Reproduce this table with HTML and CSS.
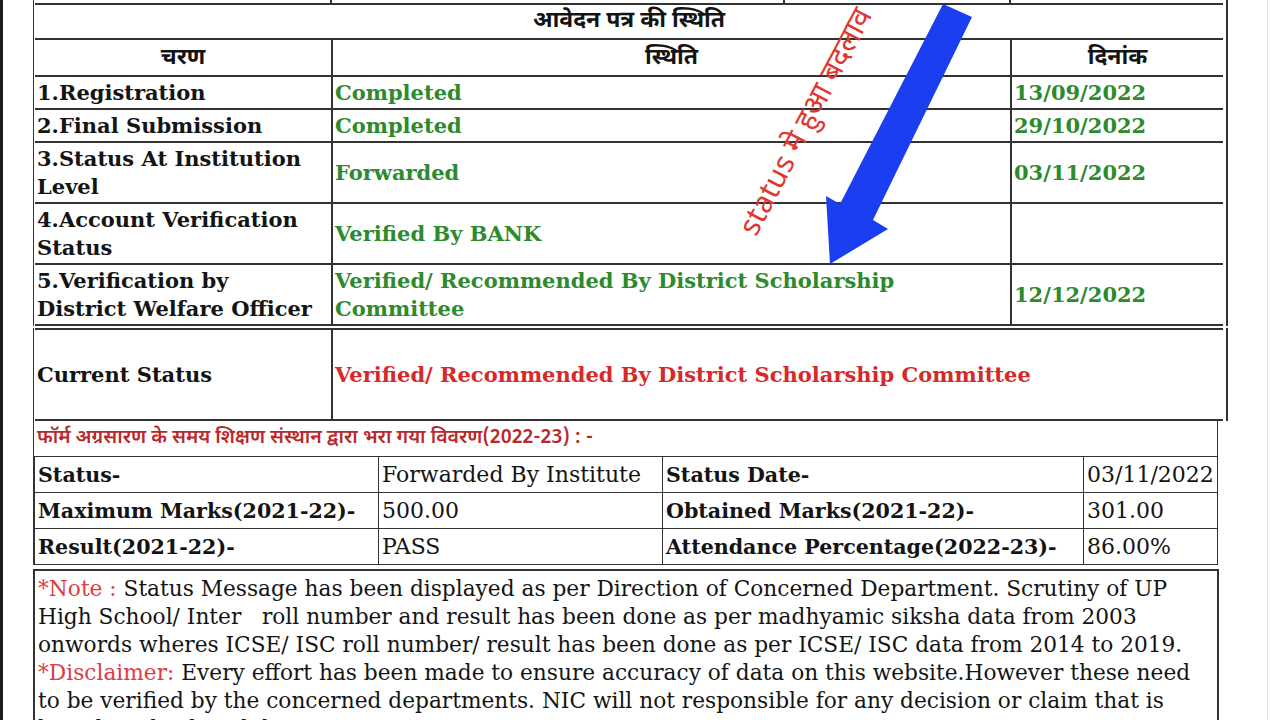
FILE: index.html
```html
<!DOCTYPE html>
<html lang="hi">
<head>
<meta charset="utf-8">
<title>आवेदन पत्र की स्थिति</title>
<link rel="stylesheet" href="styles.css">
</head>
<body>
<div class="sheet">
  <div class="frame">
    <div class="stub"><span class="s1"></span><span class="s2"></span><span class="s3"></span><span class="s4"></span></div>
    <table class="status">
      <colgroup><col class="c1"><col class="c2"><col class="c3"></colgroup>
      <tr class="title"><td colspan="3" class="hi">आवेदन पत्र की स्थिति</td></tr>
      <tr class="head"><td class="hi">चरण</td><td class="hi">स्थिति</td><td class="hi">दिनांक</td></tr>
      <tr><td class="lbl">1.Registration</td><td class="ok">Completed</td><td class="ok">13/09/2022</td></tr>
      <tr><td class="lbl">2.Final Submission</td><td class="ok">Completed</td><td class="ok">29/10/2022</td></tr>
      <tr><td class="lbl">3.Status At Institution Level</td><td class="ok">Forwarded</td><td class="ok">03/11/2022</td></tr>
      <tr><td class="lbl">4.Account Verification Status</td><td class="ok">Verified By BANK</td><td class="ok"></td></tr>
      <tr><td class="lbl">5.Verification by<br>District Welfare Officer</td><td class="ok">Verified/ Recommended By District Scholarship Committee</td><td class="ok">12/12/2022</td></tr>
    </table>
  </div>
  <div class="frame frame-current">
    <table class="current">
      <colgroup><col class="c1"><col class="c23"></colgroup>
      <tr><td class="lbl">Current Status</td><td class="bad">Verified/ Recommended By District Scholarship Committee</td></tr>
    </table>
  </div>
  <div class="form-box">
    <div class="form-head">फॉर्म अग्रसारण के समय शिक्षण संस्थान द्वारा भरा गया विवरण(2022-23) : -</div>
    <table class="details">
      <colgroup><col class="d1"><col class="d2"><col class="d3"><col class="d4"></colgroup>
      <tr><td class="key">Status-</td><td>Forwarded By Institute</td><td class="key">Status Date-</td><td>03/11/2022</td></tr>
      <tr><td class="key">Maximum Marks(2021-22)-</td><td>500.00</td><td class="key">Obtained Marks(2021-22)-</td><td>301.00</td></tr>
      <tr><td class="key">Result(2021-22)-</td><td>PASS</td><td class="key">Attendance Percentage(2022-23)-</td><td>86.00%</td></tr>
    </table>
  </div>
  <div class="note">
    <span class="warn">*Note :</span> Status Message has been displayed as per Direction of Concerned Department. Scrutiny of UP<br>
    High School/ Inter &nbsp; roll number and result has been done as per madhyamic siksha data from 2003<br>
    onwords wheres ICSE/ ISC roll number/ result has been done as per ICSE/ ISC data from 2014 to 2019.<br>
    <span class="warn">*Disclaimer:</span> Every effort has been made to ensure accuracy of data on this website.However these need<br>
    to be verified by the concerned departments. NIC will not responsible for any decision or claim that is<br>
    based on displayed data.
  </div>
</div>
<svg class="arrow" width="1280" height="720" viewBox="0 0 1280 720" aria-hidden="true">
  <polygon points="943,4 972,17 873,220 888,229 830,264 826,196 840,204" fill="#1b3ef0"/>
</svg>
<div class="annot">status मे हुआ बदलाव</div>
</body>
</html>
```
FILE: styles.css
```css
html {
  background: #fff;
}
html, body {
  margin: 0;
  height: 720px;
  overflow: hidden;
}
body {
  width: 1268px;
  box-sizing: border-box;
  border-left: 3px solid #1c1c1c;
  border-right: 1px solid #e2e2e2;
  font-family: "DejaVu Serif", "Noto Serif Devanagari", "Noto Sans Devanagari", "Lohit Devanagari", serif;
  color: #141414;
}
.sheet {
  padding-left: 30px;
  width: 1195px;
}
.frame {
  border-left: 1px solid #333;
  border-right: 2px solid #333;
  padding: 0 3px 0 1px;
  width: 1188px;
}
.stub {
  display: flex;
  height: 3px;
}
.stub span { display: block; height: 3px; }
.stub .s1 { width: 295px; border-right: 2px solid #333; }
.stub .s2 { width: 451px; border-right: 2px solid #333; }
.stub .s3 { width: 224px; border-right: 2px solid #333; }
.stub .s4 { flex: 1; }
table {
  border-collapse: collapse;
  table-layout: fixed;
}
.status, .current { width: 1188px; }
.status td, .current td {
  border: 2px solid #333;
  font-size: 21px;
  font-weight: bold;
  line-height: 28px;
  padding: 2px 2px 1px 2px;
  vertical-align: middle;
}
.status td:first-child, .current td:first-child { border-left: none; }
.status td:last-child, .current td:last-child { border-right: none; }
.c1 { width: 297px; }
.c2 { width: 679px; }
.c3 { width: 212px; }
.c23 { width: 891px; }
.status .hi {
  text-align: center;
  font-family: "Noto Sans Devanagari", "Noto Serif Devanagari", "Lohit Devanagari", "DejaVu Sans", sans-serif;
  font-size: 23px;
}
.status .title td { padding: 2px 2px 3px; }
.status .head td { padding: 4px 2px 3px; }
.status .lbl { padding-left: 2px; }
.ok { color: #2d8a2d; }
.bad { color: #d62a2a; }
.frame-current { margin-top: 2px; }
.current td { height: 89px; padding: 0 2px; }
.current td.lbl { border-right: 2px solid #333; }
.form-box {
  width: 1183px;
  border-left: 1px solid #333;
  border-right: 1px solid #333;
}
.form-head {
  height: 35px;
  line-height: 35px;
  padding-left: 3px;
  color: #b8282c;
  font-family: "Noto Sans Devanagari", "Noto Serif Devanagari", "Lohit Devanagari", "DejaVu Sans", sans-serif;
  font-size: 19.5px;
  font-weight: 600;
}
.details { width: 1183px; }
.details td {
  border: 1px solid #333;
  font-size: 22px;
  line-height: 28px;
  padding: 4px 3px 3px;
  white-space: nowrap;
  overflow: hidden;
}
.details td.key { font-weight: bold; font-size: 20.6px; }
.d1 { width: 344px; }
.d2 { width: 284px; }
.d3 { width: 421px; }
.d4 { width: 134px; }
.note {
  margin-top: 4px;
  width: 1176px;
  border: 2px solid #333;
  border-bottom: none;
  padding: 4px 3px 0;
  font-size: 21.7px;
  line-height: 28px;
  white-space: nowrap;
}
.warn { color: #e23a44; }
.arrow {
  position: absolute;
  left: 0;
  top: 0;
  pointer-events: none;
}
.annot {
  position: absolute;
  left: 757px;
  top: 238px;
  transform-origin: 0 0;
  transform: rotate(-62.4deg) translate(0, -27px);
  font-family: "Noto Sans", "Noto Sans Devanagari", "Lohit Devanagari", sans-serif;
  font-size: 30px;
  line-height: 1;
  color: #e2372f;
  white-space: nowrap;
}
```
